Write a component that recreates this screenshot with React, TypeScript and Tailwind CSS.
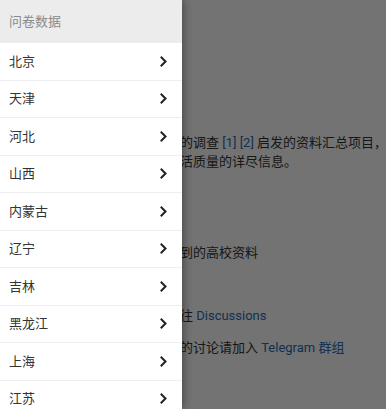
const provinces = ["北京", "天津", "河北", "山西", "内蒙古", "辽宁", "吉林", "黑龙江", "上海", "江苏", "浙江"];

const font = "font-['Roboto','Noto_Sans_CJK_SC',sans-serif]";

function Chevron() {
  return (
    <svg width="7" height="11" viewBox="0 0 7 11" fill="none" className="text-[#222]">
      <path d="M1.5 1.5 L5.5 5.5 L1.5 9.5" stroke="currentColor" strokeWidth="2" strokeLinecap="square" />
    </svg>
  );
}

function PageBody() {
  return (
    <div className={`min-h-[409px] bg-white pl-[24px] pt-[133px] text-[13px] leading-[19px] text-[#333] ${font}`}>
      <div className="overflow-hidden whitespace-nowrap">
        <p>本项目是受到一份关于高校的调查 <a className="text-[#2b6cb0]">[1]</a> <a className="text-[#2b6cb0]">[2]</a> 启发的资料汇总项目，意在</p>
        <p>为大家提供关于各地大学生活质量的详尽信息。</p>
        <p className="mt-[72px]">在这里可以查看项目所收集到的高校资料</p>
        <p className="mt-[44px]">如有任何问题或建议欢迎前往 <a className="text-[#2b6cb0]">Discussions</a></p>
        <p className="mt-[13px]">如果想要参与更及时更深入的讨论请加入 <a className="text-[#2b6cb0]">Telegram 群组</a></p>
      </div>
    </div>
  );
}

function Drawer() {
  return (
    <aside className={`absolute left-0 top-0 h-full w-[182px] overflow-hidden bg-white shadow-[2px_0_8px_rgba(0,0,0,0.35)] ${font}`}>
      <div className="flex h-[43px] items-center bg-[#ececec] px-[9px] text-[13px] text-[#8a8a8a]">
        问卷数据
      </div>
      {provinces.map((p) => (
        <div
          key={p}
          className="flex h-[37.5px] items-center justify-between border-b border-[#eeeeee] pl-[9px] pr-[15px] text-[13px] text-[#333]"
        >
          <span>{p}</span>
          <Chevron />
        </div>
      ))}
    </aside>
  );
}

export default function App() {
  return (
    <main className="relative h-[409px] w-full overflow-hidden">
      <PageBody />
      <div className="absolute inset-0 bg-black/55" />
      <Drawer />
    </main>
  );
}
